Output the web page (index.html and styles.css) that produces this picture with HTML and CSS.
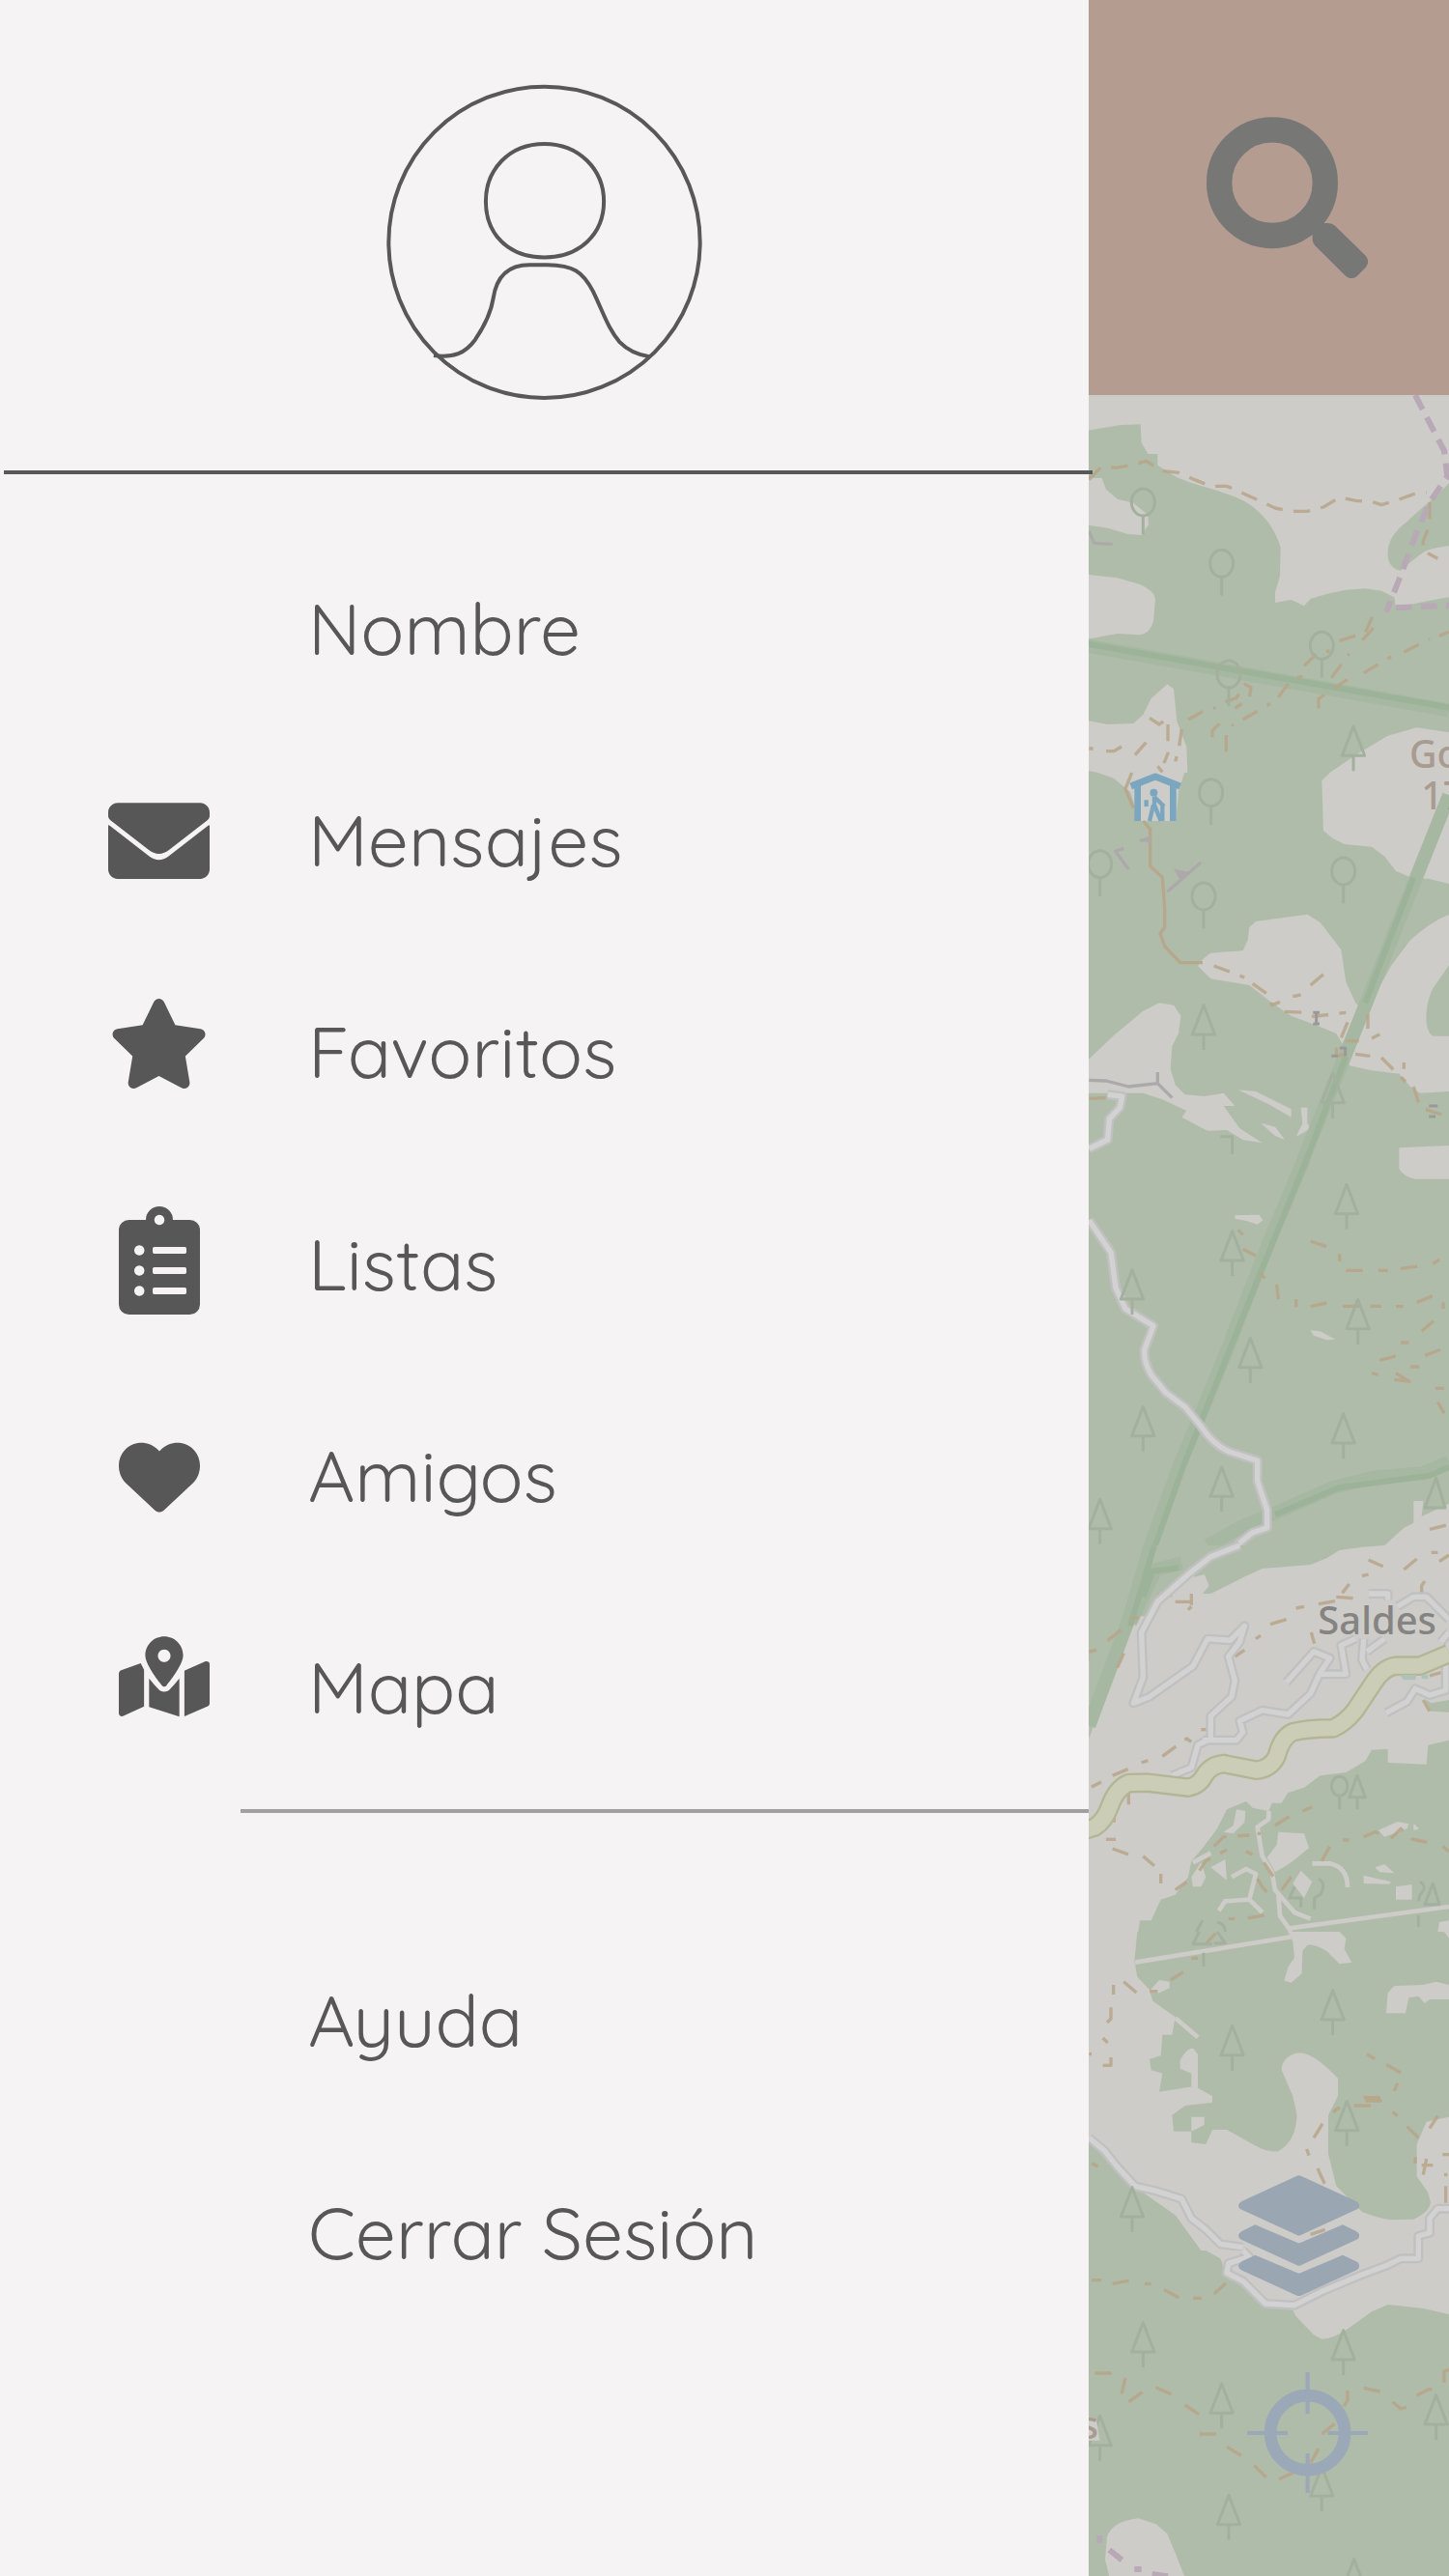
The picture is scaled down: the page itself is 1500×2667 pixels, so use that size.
FILE: index.html
```html
<!DOCTYPE html>
<html lang="es">
<head>
<meta charset="utf-8">
<title>Menú</title>
<link rel="stylesheet" href="styles.css">
</head>
<body>
<div class="app">
  <nav class="drawer">
    <div class="profile">
      <svg class="avatar" viewBox="60 78 982 982" fill="none" stroke="#585858" stroke-width="12">
        <circle cx="551" cy="570" r="484"/>
        <path d="M551 264C660 264 736 345 736 443C736 545 660 617 551 617C440 617 369 545 369 443C369 345 440 264 551 264Z"/>
        <path d="M207 922C270 930 305 915 336 873C365 830 385 790 392 745C402 675 440 640 505 640H560C640 641 670 660 702 722C735 790 750 840 785 880C812 908 840 920 880 926"/>
      </svg>
    </div>
    <hr class="rule">
    <ul class="menu">
      <li class="item"><span class="icon"></span><span class="label">Nombre</span></li>
      <li class="item">
        <span class="icon"><svg class="i-mail" viewBox="0 64 512 384"><path d="M256 352c-16.5 0-33.1-5.4-47.2-16.4L9 180Q0 174 0 181V400c0 26.500 21.500 48 48 48h416c26.500 0 48-21.500 48-48V181Q512 174 503 180L303.200 335.600C289.100 346.600 272.500 352 256 352zM10 151L202 300Q256 343 310 300L502 151Q512 143 512 132V112c0-26.500-21.500-48-48-48H48C21.500 64 0 85.500 0 112v20Q0 143 10 151z"/></svg></span>
        <span class="label">Mensajes</span>
      </li>
      <li class="item">
        <span class="icon"><svg class="i-star" viewBox="0 0 576 512"><path d="M381.200 150.300L524.900 171.500C536.800 173.200 546.800 181.600 550.600 193.100C554.400 204.700 551.300 217.300 542.700 225.900L438.500 328.100L463.100 474.700C465.100 486.700 460.200 498.900 450.200 506C440.300 513.100 427.200 514 416.500 508.300L288.100 439.800L159.800 508.300C149 514 135.900 513.100 126 506C116.100 498.900 111.100 486.700 113.200 474.700L137.800 328.100L33.580 225.900C24.970 217.300 21.910 204.700 25.690 193.100C29.460 181.600 39.430 173.200 51.420 171.500L195 150.300L259.400 17.970C264.700 6.995 275.800 0 288.100 0C300.400 0 311.500 6.995 316.900 17.970L381.200 150.300z"/></svg></span>
        <span class="label">Favoritos</span>
      </li>
      <li class="item">
        <span class="icon"><svg class="i-list" viewBox="0 0 384 512"><path fill-rule="evenodd" d="M48 64H128A64 64 0 0 1 256 64H336A48 48 0 0 1 384 112V464A48 48 0 0 1 336 512H48A48 48 0 0 1 0 464V112A48 48 0 0 1 48 64ZM192 40a24 24 0 1 0 .1 0ZM97 184a24 24 0 1 0 .1 0ZM97 280a24 24 0 1 0 .1 0ZM97 376a24 24 0 1 0 .1 0ZM168 192H312q8 0 8 8v16q0 8-8 8H168q-8 0-8-8v-16q0-8 8-8ZM168 288H312q8 0 8 8v16q0 8-8 8H168q-8 0-8-8v-16q0-8 8-8ZM168 384H312q8 0 8 8v16q0 8-8 8H168q-8 0-8-8v-16q0-8 8-8Z"/></svg></span>
        <span class="label">Listas</span>
      </li>
      <li class="item">
        <span class="icon"><svg class="i-heart" viewBox="0 32 512 448"><path d="M47.600 300.400L228.300 469.100c7.500 7 17.400 10.900 27.700 10.900s20.200-3.900 27.700-10.900L464.400 300.400c30.400-28.300 47.600-68 47.600-109.500v-5.800c0-69.900-50.500-129.500-119.400-141C347 36.500 300.600 51.400 268 84L256 96 244 84c-32.600-32.600-79-47.500-124.600-39.900C50.500 55.600 0 115.200 0 185.100v5.800c0 41.500 17.200 81.200 47.600 109.500z"/></svg></span>
        <span class="label">Amigos</span>
      </li>
      <li class="item">
        <span class="icon"><svg class="i-map" viewBox="0 0 576 512"><path d="M408 120C408 174.600 334.900 271.800 302.800 311.100C295.100 321.600 280.900 321.600 273.200 311.100C241.100 271.800 168 174.600 168 120C168 53.730 221.700 0 288 0C354.300 0 408 53.730 408 120zM288 163C310.100 163 328 145 328 123C328 101 310.100 83 288 83C265.900 83 248 101 248 123C248 145 265.900 163 288 163zM425.600 213L543.100 161C558.900 155 576 160 576 176V422.800C576 432.600 570 441.400 560.900 445.100L416 507V217zM139 170L160 212V445L32.910 502.700C17.150 514 0 505 0 488V237C0 225 5.975 218 15.090 214zM327.800 331.100C341.700 318 363.500 293 384 267V509L192 447V267C212.500 293 234.300 318 248.200 331.100C268.700 357.600 307.300 357.600 327.800 331.100z"/></svg></span>
        <span class="label">Mapa</span>
      </li>
    </ul>
    <hr class="rule rule-light">
    <ul class="menu menu-foot">
      <li class="item"><span class="icon"></span><span class="label">Ayuda</span></li>
      <li class="item"><span class="icon"></span><span class="label">Cerrar Sesión</span></li>
    </ul>
  </nav>
  <main class="page">
    <header class="topbar">
      <svg class="search" viewBox="387 362 502 502"><circle cx="591" cy="566.500" r="164.500" fill="none" stroke="#777776" stroke-width="79"/><path fill="#777776" d="M740 692H765Q777 692 786 700L881 793Q896 811 881 830L855 856Q838 871 820 857L724 762Q716 753 716 744V715Z"/></svg>
    </header>
    <div class="map">
      <svg class="terrain" viewBox="1127 409 373 2258" preserveAspectRatio="none">
        <defs>
          <g id="pine"><path d="M0 4L-35 95H35ZM0 98V143"/></g>
          <g id="oak"><ellipse rx="36" ry="42"/><path d="M0 44V100"/></g>
        </defs>
        <g transform="translate(1120 400) scale(.33333)">
          <g class="land">
            <path d="M0 0H1140V300C1110 335 1040 390 1010 420C970 450 950 480 950 520C950 560 975 570 990 572C1010 555 1020 545 1060 515C1090 500 1120 500 1140 495V655L1080 665L975 687L970 655L930 635L880 628L820 632L760 645L710 660L690 682L650 663L600 672V640L615 590L617 500C600 440 560 390 510 360C450 325 350 310 290 280L235 245V210H205L185 175L182 118L120 120L0 140Z"/>
            <path d="M0 285H62L75 320L110 350L160 362L205 400L207 430L185 462L140 458L80 440L0 428ZM0 583L110 595L180 615Q225 635 228 660L222 730Q210 770 180 772L110 768L0 788ZM0 1035L80 1050L160 1047L190 1020L215 970L265 925L285 940L295 1040L325 1120L328 1200H50L0 1190ZM770 1200L850 1145L950 1085L1040 1060L1140 1075V1200Z"/>
          </g>
          <g class="ridge"><path d="M0 803L1140 1006"/></g><g class="ridge-core"><path d="M0 797L1140 998"/></g>
          <g class="trail"><path d="M22 290L60 250L105 253L160 243L200 232L245 262L300 268L350 290L400 310H450L500 332L550 355L600 378L650 388H700L750 375L800 345L850 355L900 358L930 368L975 355L1030 335L1070 330M1080 360V430L1060 480L1058 510L1105 535M690 868L735 825L770 822M800 790L880 765L900 720L915 740L860 800M775 905L830 830M610 965L650 910L685 900M735 1000V970L840 900M875 890L960 840M1000 825L1080 785M1110 775L1140 763M330 1035L375 1010L415 998M445 980L480 968L505 925L525 935L520 970L475 1000M500 1035L585 985M405 1090V1070L450 1025M448 1135V1080L470 1050M75 1133H100L125 1118M165 1145L200 1105M210 1030L240 1050L280 1020M267 1050V1140L255 1170M310 1065L300 1130L290 1165M22 1125H35M235 1180L250 1198"/></g>
          <g class="border"><path d="M1035 27L1078 110L1125 200L1135 280L1080 360L1035 465L985 600L945 700M975 688L1140 680"/></g>
          <g class="tree"><use href="#oak" x="190" y="360"/><use href="#oak" x="434" y="550"/><use href="#oak" x="745" y="805"/><use href="#oak" x="456" y="894"/><use href="#pine" x="843" y="1052"/></g>
          <path class="cliff" d="M22 450L38 487L95 490"/>
          <text class="peak" x="1017" y="1185">Go</text>
        </g>
        <g transform="translate(1120 800) scale(.33333)">
          <g class="land">
            <path d="M50 0H318L300 60L292 150H180L150 60L100 18ZM770 0L745 25L750 180L780 205L815 222L900 230L940 260L975 305L1020 325L1080 330L1140 345V0ZM360 600Q375 575 400 560L500 553L515 520L520 480L540 462L700 440L740 465L805 550L820 650L850 715L880 745L960 600L1020 520Q1080 465 1140 440V598L1090 670C1065 720 1060 800 1090 818H1140V990L1050 995L1020 975L985 935L900 925L830 910L825 870L790 810L730 785L650 755L590 715L520 660L400 640Z"/>
            <path d="M0 910L100 815L190 740L240 715L285 722L307 755L300 810L280 850L275 920L290 970L320 1000L380 1005L440 995L475 1035H440L490 1105L560 1150L500 1140L450 1110L390 1112L310 1070L325 1050L250 1015L190 995H0ZM485 985L540 990L650 1045V1070L580 1030ZM680 1040H700V1090L712 1105L665 1130L685 1090ZM555 1088L600 1100L630 1140L600 1128ZM985 1200V1165L1140 1158V1200Z"/>
          </g>
          <g class="ridge"><path d="M1140 70L865 760L688 1200"/></g><g class="ridge-core"><path d="M1030 325L880 715M820 880L698 1200"/></g>
          <g class="trail"><path d="M155 0L135 50L160 110M190 150L212 175V290L250 325L257 420V480L243 500L258 540L305 590H375" stroke-dasharray="none"/><path d="M410 600L505 636M530 655L580 690L590 722L615 712M630 742L690 745L720 757L820 745M710 660L755 622M655 695L680 690M825 775L790 860V880L830 872L895 880M820 833H860M888 750V795M900 825L925 812M930 885L1005 960M1030 975L1050 1040L1095 1055L1140 1068M1000 900V920M22 1012L75 1010V1000"/></g>
          <g class="road-case"><path d="M80 1000L125 1005L118 1040L85 1075L80 1140L22 1168"/></g><g class="road"><path d="M80 1000L125 1005L118 1040L85 1075L80 1140L22 1168"/></g>
          <g class="tree"><use href="#oak" x="401" y="62"/><use href="#oak" x="56" y="284"/><use href="#oak" x="378" y="384"/><use href="#oak" x="812" y="306"/><use href="#pine" x="378" y="718"/><use href="#pine" x="779" y="930"/><path d="M430 1130H467V1185"/></g>
          <path class="cliff" d="M100 245L130 235M105 245L145 300M180 210H212M265 370L370 278M22 955L75 957L145 975L235 965L280 1010M235 930V965"/>
          <path class="cliff-fill" d="M285 298L335 310L305 335ZM190 205L213 195V225Z"/>
          <path class="gate" d="M718 745H738M728 745V780M718 780H738M775 880H795M800 855H818V880M1078 1035H1105M1078 1068H1098"/>
          <g fill="none" stroke="#7ba6bf"><path stroke-width="21" d="M152 42L228 12L305 42"/><path stroke-width="20" d="M173 30V150M283 30V150"/><path stroke-width="13" d="M225 75V100L245 150M222 100L210 150M200 85V105M225 75L255 105M250 95V150"/></g><circle cx="223" cy="62" r="12" fill="#7ba6bf"/>
          <text class="peak" x="1054" y="115">17</text>
        </g>
        <g transform="translate(1120 1200) scale(.33333)">
          <g class="land"><path d="M985 0V30Q1000 55 1035 62H1140V0ZM475 175L550 173L562 190L545 203L510 192L475 185ZM710 532L740 535L787 560L760 562L720 548ZM940 1200L1000 1145L1030 1130V1062H1060L1055 1110L1140 1070V1200Z"/></g>
          <g class="ridge"><path d="M690 0L580 260L440 620L300 960L212 1200M390 1200L500 1140L600 1100L780 1020L900 990L1060 975L1140 940"/></g><g class="ridge-core"><path d="M698 0L570 315L460 590L320 940L228 1200M600 1105L800 1020L1080 983L1140 957"/></g>
          <g class="trail"><path d="M485 220L500 235M500 280L540 300M555 355L568 370M605 390L610 435M665 435V460M710 458L760 447M710 255L760 272M800 295V318M820 346H880M920 346H950M990 340L1045 333M1090 325L1110 312M810 457H930M975 458H998M1040 445L1090 425M1055 535L1092 503M925 625L975 612M990 570H1015M1065 610L1118 590M900 665L920 670M970 685L1055 695M975 665L1015 690M1020 645H1048M1098 712H1125M1105 755L1125 790M1122 445V465M1080 1150L1140 1135"/></g>
          <g class="road-case"><path d="M22 190L90 290L105 400L135 465L222 518L195 590Q190 625 215 670L260 725L320 770L370 830Q410 890 460 910L545 937V1000L575 1090V1145L530 1160L480 1200"/></g><g class="road"><path d="M22 190L90 290L105 400L135 465L222 518L195 590Q190 625 215 670L260 725L320 770L370 830Q410 890 460 910L545 937V1000L575 1090V1145L530 1160L480 1200"/></g>
          <g class="tree"><use href="#pine" x="822" y="75"/><use href="#pine" x="467" y="220"/><use href="#pine" x="156" y="340"/><use href="#pine" x="857" y="432"/><use href="#pine" x="523" y="552"/><use href="#pine" x="190" y="765"/><use href="#pine" x="812" y="787"/><use href="#pine" x="434" y="953"/><use href="#pine" x="56" y="1053"/><path d="M1100 990L1065 1083H1128Z"/></g>
        </g>
        <g transform="translate(1120 1600) scale(.33333)">
          <g class="land"><path d="M0 0H1140V1200H0Z"/></g>
          <g class="wood">
            <path d="M0 0H940L870 5L800 15L760 40L710 60L560 72L500 100L400 150H375L395 125L380 90L350 98L330 75L290 120L240 160L210 220H150L120 320L22 600V360H0Z"/>
            <path d="M175 1200L180 1165H215L245 1100L290 1085L330 1030L340 980L375 940L420 880L450 820L510 795L530 815L580 825L590 800H620L640 768L690 752L740 715L820 705L880 670L900 635L950 632V675L1070 680L1075 620L1140 605V1200ZM1065 478L1085 490L1140 480V518L1085 515Z"/>
          </g>
          <g class="land"><path d="M480 820L508 825L505 860L470 895L440 890L470 870ZM610 890L690 895L705 940L650 985L600 1015L575 970L605 930ZM680 1010L715 1045L690 1095L655 1050ZM910 1000L940 990L970 1018L925 1015ZM975 1060L1025 1053V1100H975ZM875 1025L960 1045L955 1052L875 1050ZM920 885L980 858L1015 865L1010 880L940 905ZM1030 865L1048 880L1030 885ZM445 975L450 1040L400 1000ZM345 1060L340 1030L370 985L385 1030L370 1060ZM1110 1170L1140 1165V1200H1105Z"/></g>
          <g class="land-line"><path d="M580 825V850L545 875L560 965L590 1015L600 1070L660 1140L710 1160M610 1080L615 1150L650 1200M715 988H770Q825 1000 825 1062M425 1135L445 1105L520 1100L540 1020L510 1005L465 1030M520 1100L560 1140M345 985L400 955M640 1190L1140 1122"/></g>
          <g class="ridge"><path d="M212 0L145 230L22 560M310 55L230 75L150 240"/></g><g class="ridge-core"><path d="M225 0L150 250M300 70L220 80L190 160"/></g>
          <g class="trail"><path d="M22 330L45 325M150 225H175M205 235L235 155H280M290 175H355L330 200M340 150V185M80 295L150 240M110 380L130 335M475 345L505 325M540 290L555 280M585 245L635 230M665 195L690 190M735 182L790 172L830 120M790 160L860 165M870 95L890 90M890 45L935 65M1000 75L1040 42M1055 160V125L1080 90M1085 22H1105M1110 50L1140 30M712 270L722 305M250 655L325 600L340 610M370 572H395M185 675L205 668M95 715L150 692M30 750L60 735M145 770V805M100 830V860M75 913H105M95 942L145 960M190 965L225 995M245 1020V1050M290 1070L325 1045M365 1010L385 980L450 945M410 935L440 905L520 900M510 950L530 960M550 890V900M600 870L650 838M685 825L715 812M565 985L595 1030M545 1035L560 1060L590 1095M620 1070L650 1030M745 980L770 935M810 915H830M875 905L910 890L940 900M960 910L990 880L1025 912L1085 925M1120 935L1140 950M455 1160H475M515 1158L570 1148M1060 480L1080 515M1080 405L1115 395"/></g>
          <g class="road-case"><path id="lanes" d="M490 0L400 35L330 90L235 175L185 270L190 410L160 490L210 470L345 375L390 290L460 295L505 250L490 300L455 345L475 420L465 470L400 530V600L360 620L340 690L280 715M375 605H480L500 580L490 545L560 512L640 525L710 460L740 395L770 350L720 330L635 425M740 400H820L805 310L850 290M875 290L870 355L885 385M885 330L940 290M945 520L1010 485L1035 445L1080 465L1130 450V370M890 150H950V170M980 190L1030 160H1070L1140 230M1115 300L1140 270"/></g>
          <g class="road"><use href="#lanes"/></g>
          <path id="main-road" class="highway-case" d="M0 887L40 875Q70 855 85 815Q105 755 145 738L205 737L330 752Q365 745 380 715Q400 682 440 678L540 698Q585 695 605 655Q620 595 655 580Q700 568 780 568Q820 550 850 510L910 420Q940 378 975 374H1050L1140 336"/>
          <path class="highway" d="M0 887L40 875Q70 855 85 815Q105 755 145 738L205 737L330 752Q365 745 380 715Q400 682 440 678L540 698Q585 695 605 655Q620 595 655 580Q700 568 780 568Q820 550 850 510L910 420Q940 378 975 374H1050L1140 336"/>
          <path d="M985 402H1040L1035 418H1000ZM1055 402H1075V415H1055Z" fill="#b0c2b6"/>
          <g class="tree"><ellipse cx="800" cy="748" rx="25" ry="30"/><path d="M800 780V820M855 715L830 782H880ZM855 782V820M735 1035Q760 1050 740 1085L722 1095V1130M660 1060L645 1095H680V1125M1050 1045Q1075 1060 1050 1085L1045 1105M1090 1050L1065 1115H1110ZM1045 1150V1185M375 1165L355 1200M420 1170Q445 1175 445 1200"/></g>
          <text class="town" x="733" y="277" textLength="368" lengthAdjust="spacingAndGlyphs">Saldes</text>
        </g>
        <g transform="translate(1120 2000) scale(.33333)">
          <g class="land">
            <path d="M0 0H172L163 90L172 140L210 180L220 215L290 265L280 320H250L245 385L210 395L215 430L250 440L240 497L350 480L405 510V530L320 540L280 570L285 620H340V655L385 660L405 615H450L540 665Q575 685 610 682Q665 650 668 570L655 510L620 430C620 390 660 370 690 378C730 390 760 420 795 455V510L765 570V690L790 790L870 870Q920 890 960 895L1030 893Q1080 870 1083 840L1075 810L1040 760V660L1070 590L1140 575V990H370L290 880L190 810L130 770L0 625Z"/>
            <path d="M305 400Q325 360 345 362L360 380V490H340V440L305 425ZM640 0H800L820 20L815 55L838 95L800 100L760 60Q720 35 700 42L685 60L683 130L650 158L628 152L640 110L660 80L655 30ZM945 253L950 190L970 168L1060 165L1100 155L1140 165V210H1080L1065 222L1045 200L1015 205L1005 253ZM205 190L240 150L272 155V175L240 190ZM340 575H380V600L340 620ZM1125 0H1140V20Z"/>
          </g>
          <g class="land-line"><path d="M165 95L655 15M290 268L360 328"/></g>
          <g class="trail"><path d="M130 155L170 190M210 185H235M275 150L315 125M340 82H360M385 38L415 5M98 165V195M90 235V270L75 285M65 330L80 345M90 390V415H65M22 380H30M30 720L50 728M885 380L910 395M945 412L990 438M980 470L970 495M780 560L800 545M845 540H930M875 515H940M880 525H940M965 560L980 572M720 640L748 595M698 675L705 695M732 735L755 785M1010 605L1045 640M1035 700V720M1080 610L1105 572M1060 755L1070 705M1055 725H1090M1120 692H1140M1130 750V760M1130 790V850M710 940L755 925"/></g>
          <g class="road-case"><path id="lane-s" d="M22 640L70 680L110 730L165 790L230 805L310 830L340 890L385 925L430 970L500 980M1045 990V945L1080 935V890L1105 860H1140"/></g><g class="road"><use href="#lane-s"/></g>
          <g class="tree"><use href="#pine" x="779" y="178"/><use href="#pine" x="467" y="288"/><use href="#pine" x="823" y="522"/><use href="#pine" x="156" y="790"/><path d="M365 0L345 38H405M378 65V108M420 0L445 35H410"/></g>
        </g>
        <g transform="translate(1120 2330) scale(.33333)">
          <g class="land"><path d="M385 0H1140V198L1060 180L950 168L900 190L830 240Q780 275 745 275L720 262L665 205L655 185L570 170L450 75L430 25ZM85 1011L72 960L78 890Q95 840 175 832L230 850L265 880L290 940L318 1011Z"/></g>
          <g class="road-case"><path id="lane-e" d="M500 0L520 20L455 40L450 70L500 95L570 165L660 170L750 125L870 75L950 45L990 25H1045V0"/></g><g class="road"><use href="#lane-e"/></g>
          <g class="trail"><path d="M30 92H60M95 103L155 92M195 103H215M255 122L305 148M345 148H372M410 135L447 102M40 381H105M135 395L122 450M145 470L195 435M230 425L285 450M320 480L372 515M365 570H418M450 610L500 640M535 668L583 715M612 710L655 690M710 660L738 610M745 570L785 538M825 435V465L810 490M875 427L935 440M965 470L990 492L1015 485M1040 450L1080 430L1100 440M1125 410V375L1140 370"/></g>
          <path class="border" d="M55 885V908M85 930L135 970M163 990H185M218 1005L285 1015"/>
          <g class="tree"><use href="#pine" x="190" y="220"/><use href="#pine" x="812" y="244"/><use href="#pine" x="434" y="410"/><use href="#pine" x="1100" y="445"/><use href="#pine" x="56" y="510"/><use href="#pine" x="745" y="668"/><use href="#pine" x="456" y="756"/><use href="#pine" x="845" y="955"/></g>
          <path class="land" d="M0 525H45L55 590H0Z"/>
          <text class="peak" x="-6" y="585">s</text>
        </g>
      </svg>
      <svg class="layers" viewBox="486 755 376 376" fill="#9aa7b3"><path d="M668 757Q674 754 680 757L850 835Q862 841 862 850T850 863L680 941Q674 944 668 941L498 863Q486 858 486 850T498 835Z"/><path id="sheet" d="M538 909L668 964Q674 967 680 964L810 909L850 928Q862 934 862 943T850 957L680 1035Q674 1038 668 1035L498 957Q486 951 486 943T498 928Z"/><use href="#sheet" y="94"/></svg>
      <svg class="locate" viewBox="512 378 376 376" fill="none" stroke="#9aa8b7"><circle cx="700" cy="566" r="115.500" stroke-width="38"/><path stroke-width="12" d="M700 378V507M700 630V754M512 567H638M763 567H888"/></svg>
    </div>
  </main>
</div>
</body>
</html>
```
FILE: styles.css
```css
body { margin: 0; background: #f5f3f4; }

.app { display: flex; width: 1500px; height: 2667px; overflow: hidden; }

.drawer {
  position: relative;
  z-index: 1;
  width: 1127px;
  flex: none;
  background: #f5f3f4;
  color: #575757;
  font: 400 74.700px/219.400px "Quicksand", "Lato", sans-serif;
}

.profile { display: flex; justify-content: center; height: 400px; padding-top: 86.500px; }
.avatar { width: 327px; height: 327px; }

.rule {
  height: 4px;
  margin: 0 -4px 0 4px;
  border: 0;
  background: #585858;
}
.rule-light { margin: 16.500px 0 0 249px; background: #a1a0a1; }

.menu { margin: 0; padding: 50px 0 0; list-style: none; }
.menu-foot { padding-top: 105px; }
.item { display: grid; grid-template-columns: 105px 1fr; column-gap: 102px; height: 219.400px; padding-left: 112px; }
.icon { display: flex; align-items: center; justify-content: center; }
.icon svg { flex: none; fill: #575757; }

.i-mail { width: 105px; height: 79px; margin-top: 2px; }
.i-star { width: 105px; height: 93px; margin-bottom: 17px; }
.i-list { width: 84px; height: 112px; margin-bottom: 6px; }
.i-heart { width: 84px; height: 73.500px; margin-top: 2px; }
.i-map { width: 94px; height: 84px; margin: 0 -10px 22px 0; }

.page { width: 373px; flex: none; display: flex; flex-direction: column; }
.topbar { height: 409px; box-sizing: border-box; padding: 121px 0 0 122px; background: #b59c90; }
.search { display: block; width: 167.300px; height: 167.300px; }

.map { position: relative; height: 2258px; background: #b0bcaa; }
.terrain { display: block; width: 373px; height: 2258px; }
.layers { position: absolute; left: 155px; top: 1842.700px; width: 125.300px; height: 125.300px; }
.locate { position: absolute; left: 163.700px; top: 2047px; width: 125.300px; height: 125.300px; }

.terrain path, .terrain ellipse { stroke-linejoin: round; }
.land { fill: #cdccc8; }
.wood { fill: #b0bcaa; }
.land-line { fill: none; stroke: #cdccc8; stroke-width: 14; }
.ridge { fill: none; stroke: #a6b8a1; stroke-width: 42; }
.ridge-core { fill: none; stroke: #9db399; stroke-width: 18; }
.trail { fill: none; stroke: #b7a588; stroke-width: 10; stroke-dasharray: 52 34; opacity: .85; }
.border { fill: none; stroke: #b9a8b6; stroke-width: 18; stroke-dasharray: 50 28; }
.cliff { fill: none; stroke: #ada9ab; stroke-width: 10; }
.cliff-fill { fill: #ada9ab; }
.gate { fill: none; stroke: #999; stroke-width: 9; }
.tree { fill: none; stroke: #a3b09e; stroke-width: 9; }
.road-case { fill: none; stroke: #c0c0c1; stroke-width: 30; }
.road { fill: none; stroke: #d3d2d2; stroke-width: 16; }
.highway-case { fill: none; stroke: #b4b594; stroke-width: 62; }
.highway { fill: none; stroke: #cccdb6; stroke-width: 48; }
.peak { fill: #a99b90; font: 500 118px "Noto Sans", sans-serif; }
.town { fill: #858483; font: 500 122px "Noto Sans", sans-serif; paint-order: stroke; stroke: #cdccc8; stroke-width: 12; }
```
